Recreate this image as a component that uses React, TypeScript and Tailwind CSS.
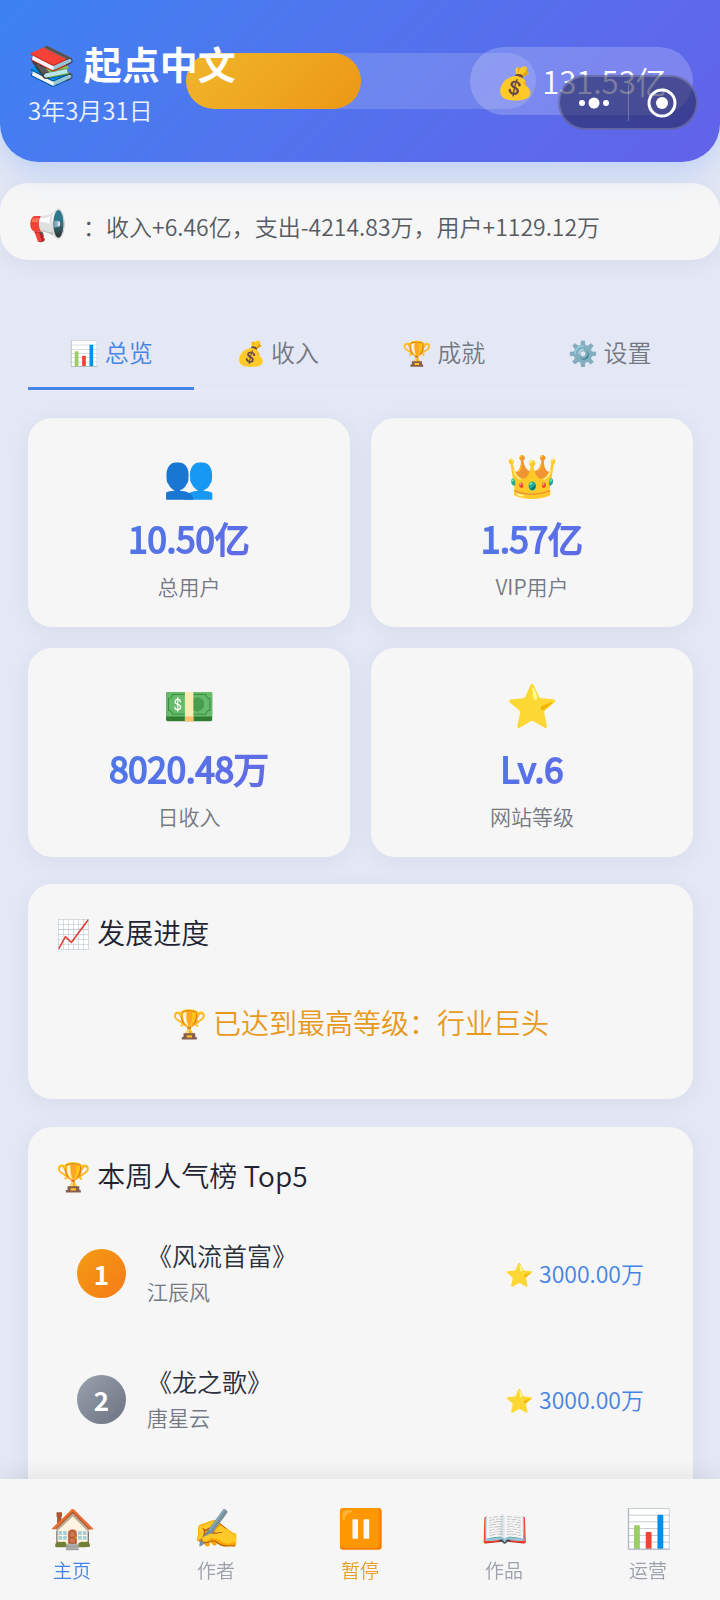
import { useState } from "react";
import clsx from "clsx";

const TABS = [
  { id: "overview", icon: "📊", label: "总览" },
  { id: "income", icon: "💰", label: "收入" },
  { id: "awards", icon: "🏆", label: "成就" },
  { id: "settings", icon: "⚙️", label: "设置" },
];

const STATS = [
  { icon: "👥", value: "10.50亿", label: "总用户" },
  { icon: "👑", value: "1.57亿", label: "VIP用户" },
  { icon: "💵", value: "8020.48万", label: "日收入" },
  { icon: "⭐", value: "Lv.6", label: "网站等级" },
];

const RANKING = [
  {
    title: "《风流首富》",
    author: "江辰风",
    score: "3000.00万",
    badge: "from-[#f39c12] to-[#f57a18]",
  },
  {
    title: "《龙之歌》",
    author: "唐星云",
    score: "3000.00万",
    badge: "from-[#9ca3af] to-[#6b7280]",
  },
];

const NAV = [
  { icon: "🏠", label: "主页", color: "text-[#4583e8]" },
  { icon: "✍️", label: "作者", color: "text-[#9ca0ab]" },
  { icon: "⏸️", label: "暂停", color: "text-[#e8a02a]" },
  { icon: "📖", label: "作品", color: "text-[#9ca0ab]" },
  { icon: "📊", label: "运营", color: "text-[#9ca0ab]" },
];

const CARD = "rounded-3xl bg-[#f6f6f6] shadow-[0_4px_20px_rgba(60,70,130,0.08)]";

function Capsule() {
  return (
    <div className="absolute top-[75px] right-[22px] z-20 flex h-[55px] w-[140px] items-center rounded-full border-2 border-white/20 bg-[#23265a]/60">
      <button type="button" aria-label="更多" className="flex flex-1 justify-center">
        <svg width="32" height="14" viewBox="0 0 32 14" fill="#fff">
          <circle cx="4" cy="7" r="3" />
          <circle cx="16" cy="7" r="5.5" />
          <circle cx="28" cy="7" r="3" />
        </svg>
      </button>
      <span className="h-9 w-px bg-white/25" />
      <button type="button" aria-label="关闭" className="flex flex-1 justify-center">
        <svg width="30" height="30" viewBox="0 0 30 30">
          <circle cx="15" cy="15" r="13" fill="none" stroke="#fff" strokeWidth="3" />
          <circle cx="15" cy="15" r="6" fill="#fff" />
        </svg>
      </button>
    </div>
  );
}

function Header() {
  return (
    <header className="relative flex h-[162px] shrink-0 items-center rounded-b-[38px] bg-linear-135 from-[#3c82f1] to-[#6262e9] pr-[27px] pl-7 text-white shadow-[0_8px_32px_rgba(59,130,246,0.25)]">
      <div className="relative z-10 w-[158px] pt-1.5 whitespace-nowrap">
        <h1 className="text-[38px] leading-[46px] font-bold">📚 起点中文</h1>
        <p className="mt-1.5 text-2xl leading-9 text-white/90">3年3月31日</p>
      </div>
      <div className="-mr-[66px] h-14 flex-1 rounded-full bg-white/15">
        <div className="h-full w-1/2 rounded-full bg-linear-135 from-[#f0b62a] to-[#ec9714]" />
      </div>
      <div className="flex h-[68px] w-[223px] items-center justify-center rounded-full bg-white/20 text-[31px] whitespace-nowrap">
        💰 131.53亿
      </div>
      <Capsule />
    </header>
  );
}

export default function App() {
  const [tab, setTab] = useState("overview");

  return (
    <div className="flex min-h-screen flex-col bg-[#e4e8f5] font-['Noto_Sans_CJK_SC',sans-serif] font-[350]">
      <Header />

      <div className="mt-[21px] flex h-[77px] shrink-0 items-center gap-4 rounded-[28px] bg-[#f6f6f6] px-7 text-[#565b63] shadow-[0_4px_20px_rgba(60,70,130,0.08)]">
        <span className="pt-1 text-[31px]">📢</span>
        <p className="pt-2.5 text-[23px] whitespace-nowrap">
          ：收入+6.46亿，支出-4214.83万，用户+1129.12万
        </p>
      </div>

      <main className="flex flex-1 flex-col pt-[55px] pr-[27px] pl-7">
        <div role="tablist" className="flex border-b border-white/20">
          {TABS.map((t) => (
            <button
              key={t.id}
              type="button"
              role="tab"
              aria-selected={tab === t.id}
              onClick={() => setTab(t.id)}
              className={clsx(
                "h-[75px] flex-1 border-b-3 pt-0.5 text-2xl",
                tab === t.id
                  ? "border-[#4583e4] text-[#4583e4]"
                  : "border-transparent text-[#747883]",
              )}
            >
              {t.icon} {t.label}
            </button>
          ))}
        </div>

        <div className="mt-[27px] grid grid-cols-2 gap-[21px]">
          {STATS.map((s) => (
            <div
              key={s.label}
              className={clsx(CARD, "flex h-[209px] flex-col items-center pt-[25px]")}
            >
              <span className="text-[42px] leading-[60px]">{s.icon}</span>
              <span className="mt-[10px] self-stretch bg-linear-135 from-[#3b7ee8] to-[#6b63e4] bg-clip-text text-center text-[35px] leading-[50px] text-transparent [-webkit-text-stroke:2px]">
                {s.value}
              </span>
              <span className="mt-1.5 text-[21px] leading-[34px] text-[#747883]">{s.label}</span>
            </div>
          ))}
        </div>

        <section className={clsx(CARD, "mt-[27px] h-[215px] p-7")}>
          <h2 className="text-[28px] leading-10 text-[#1f2433]">📈 发展进度</h2>
          <p className="mt-[50px] text-center text-[28px] leading-10 text-[#e8991c]">
            🏆 已达到最高等级：行业巨头
          </p>
        </section>

        <section className={clsx(CARD, "mt-7 flex-1 px-7 pt-7 pb-36")}>
          <h2 className="text-[28px] leading-10 text-[#1f2433]">🏆 本周人气榜 Top5</h2>
          <ol className="mt-[15px]">
            {RANKING.map((book, i) => (
              <li key={book.title} className="flex h-[126px] items-center px-[21px]">
                <span
                  className={clsx(
                    "flex size-[49px] items-center justify-center rounded-full bg-linear-135 text-[26px] font-bold text-white",
                    book.badge,
                  )}
                >
                  {i + 1}
                </span>
                <div className="ml-[21px] flex-1">
                  <p className="text-[25px] leading-9 text-[#2b303c]">{book.title}</p>
                  <p className="text-[21px] leading-9 text-[#747883]">{book.author}</p>
                </div>
                <span className="text-[23px] text-[#4583e4]">⭐ {book.score}</span>
              </li>
            ))}
          </ol>
        </section>
      </main>

      <nav className="fixed inset-x-0 bottom-0 z-30 flex h-[121px] bg-[#f6f6f6] pt-[22px] shadow-[0_-4px_20px_rgba(0,0,0,0.08)]">
        {NAV.map((item) => (
          <button
            key={item.label}
            type="button"
            className={clsx("flex flex-1 flex-col items-center", item.color)}
          >
            <span className="text-[38px] leading-[50px]">{item.icon}</span>
            <span className="mt-[5px] text-[19px] leading-7">{item.label}</span>
          </button>
        ))}
      </nav>
    </div>
  );
}
